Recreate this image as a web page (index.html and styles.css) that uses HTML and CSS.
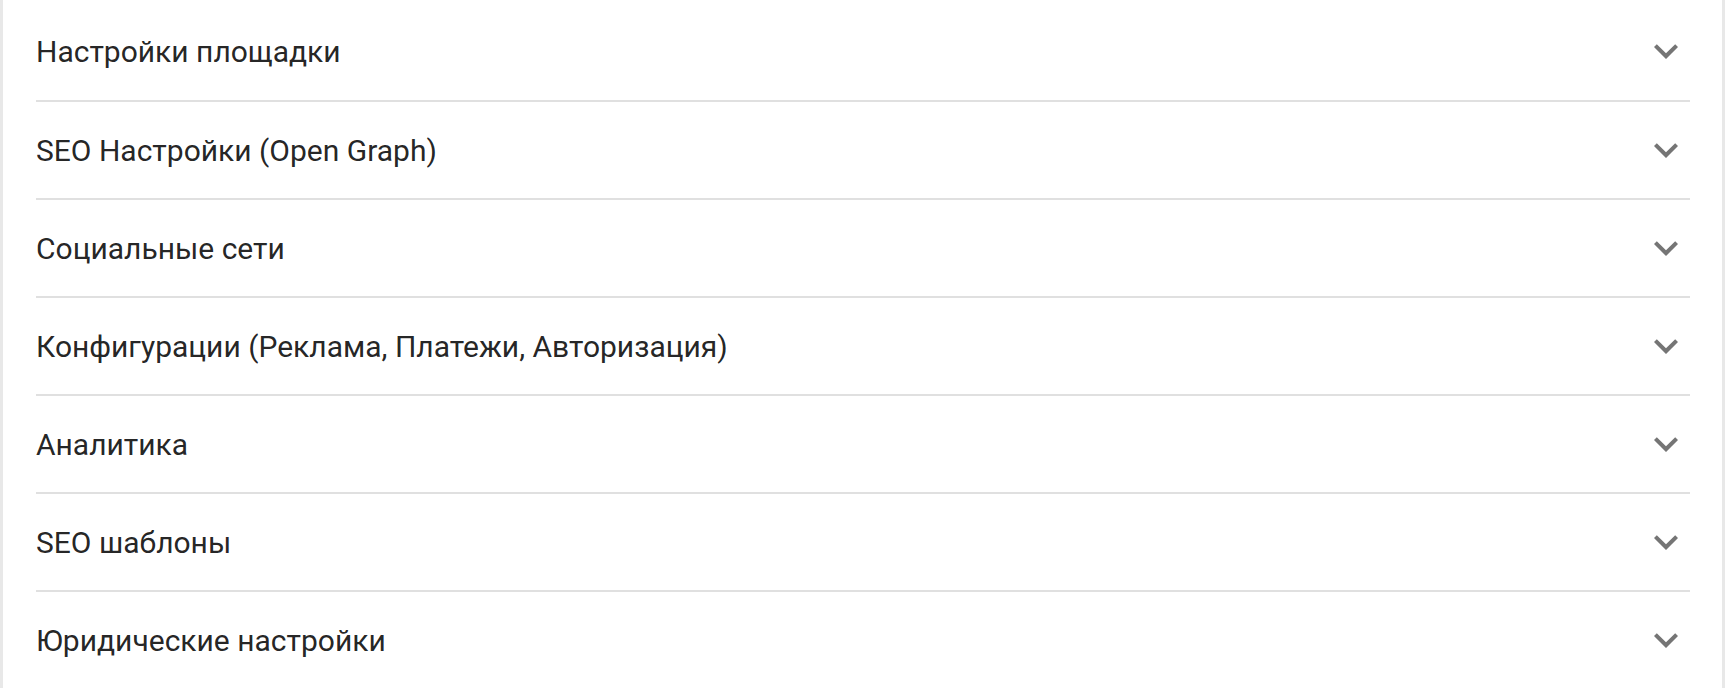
FILE: index.html
```html
<!DOCTYPE html>
<html lang="ru">
<head>
    <meta charset="utf-8">
    <meta name="viewport" content="width=device-width, initial-scale=1.0">
    <title>Настройки</title>
    <link rel="stylesheet" href="styles.css">
</head>
<body>
    <main class="settings">
        <section class="panel">
            <button class="panel-head">
                <span class="panel-title">Настройки площадки</span>
                <svg class="chevron" viewBox="0 0 24 24"><path d="M16.59 8.59L12 13.17 7.41 8.59 6 10l6 6 6-6z"/></svg>
            </button>
        </section>
        <section class="panel">
            <button class="panel-head">
                <span class="panel-title">SEO Настройки (Open Graph)</span>
                <svg class="chevron" viewBox="0 0 24 24"><path d="M16.59 8.59L12 13.17 7.41 8.59 6 10l6 6 6-6z"/></svg>
            </button>
        </section>
        <section class="panel">
            <button class="panel-head">
                <span class="panel-title">Социальные сети</span>
                <svg class="chevron" viewBox="0 0 24 24"><path d="M16.59 8.59L12 13.17 7.41 8.59 6 10l6 6 6-6z"/></svg>
            </button>
        </section>
        <section class="panel">
            <button class="panel-head">
                <span class="panel-title">Конфигурации (Реклама, Платежи, Авторизация)</span>
                <svg class="chevron" viewBox="0 0 24 24"><path d="M16.59 8.59L12 13.17 7.41 8.59 6 10l6 6 6-6z"/></svg>
            </button>
        </section>
        <section class="panel">
            <button class="panel-head">
                <span class="panel-title">Аналитика</span>
                <svg class="chevron" viewBox="0 0 24 24"><path d="M16.59 8.59L12 13.17 7.41 8.59 6 10l6 6 6-6z"/></svg>
            </button>
        </section>
        <section class="panel">
            <button class="panel-head">
                <span class="panel-title">SEO шаблоны</span>
                <svg class="chevron" viewBox="0 0 24 24"><path d="M16.59 8.59L12 13.17 7.41 8.59 6 10l6 6 6-6z"/></svg>
            </button>
        </section>
        <section class="panel">
            <button class="panel-head">
                <span class="panel-title">Юридические настройки</span>
                <svg class="chevron" viewBox="0 0 24 24"><path d="M16.59 8.59L12 13.17 7.41 8.59 6 10l6 6 6-6z"/></svg>
            </button>
        </section>
    </main>
</body>
</html>
```

FILE: styles.css
```css
body {
    margin: 0;
    font-family: Roboto, "Liberation Sans", sans-serif;
    background-color: #fff;
}
.settings {
    box-sizing: border-box;
    height: 688px;
    margin-right: 1px;
    padding: 2px 32px 0 33px;
    border-left: 3px solid #e8e8e8;
    border-right: 3px solid #e8e8e8;
    overflow: hidden;
}
.panel + .panel {
    border-top: 2px solid #e0e0e0;
}
.panel-head {
    display: flex;
    align-items: center;
    justify-content: space-between;
    width: 100%;
    height: 96px;
    padding: 0;
    border: none;
    background: none;
    font: 400 30px Roboto, "Liberation Sans", sans-serif;
    color: rgba(0, 0, 0, 0.87);
    text-align: left;
    cursor: pointer;
}
.panel:first-child .panel-head {
    height: 98px;
}
.chevron {
    width: 48px;
    height: 48px;
    fill: #757575;
    flex-shrink: 0;
}
```
